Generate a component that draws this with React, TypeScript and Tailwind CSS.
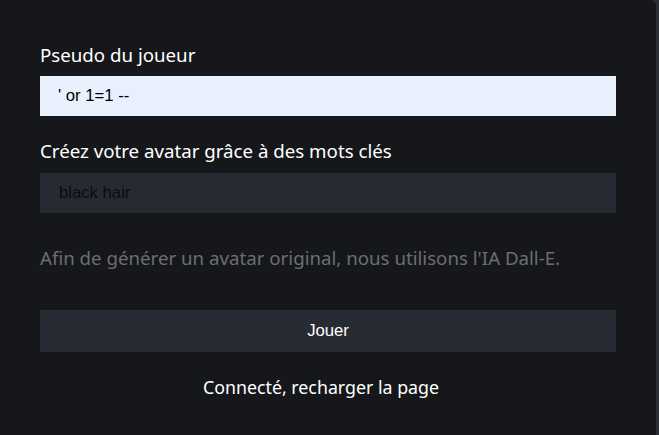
import React from 'react';

const labelFont = { fontFamily: '"Noto Sans", "Open Sans", sans-serif' };

const App = () => {
  return (
    <div className="flex h-[435px] w-[659px] bg-[#2b2e35]">
      <div
        className="flex w-[656px] flex-col rounded-tr-[6px] bg-[#16171b] px-10 pt-[41px]"
        style={labelFont}
      >
        <label className="h-[27px] text-[18.7px] leading-[27px] text-white">Pseudo du joueur</label>
        <input
          className="mt-2 h-10 w-full bg-[#e8f0fe] pl-[18px] font-['Liberation_Sans',Arial,sans-serif] text-[16.7px] text-black outline-none"
          defaultValue="' or 1=1 --"
        />

        <label className="mt-[21px] h-[27px] text-[18.7px] leading-[27px] text-white">
          Créez votre avatar grâce à des mots clés
        </label>
        <input
          className="mt-[9px] h-10 w-full bg-[#262a33] pl-[19px] font-['Liberation_Sans',Arial,sans-serif] text-[16.7px] text-[#0d0d0d] outline-none"
          defaultValue="black hair"
        />

        <p className="mt-[31px] h-[27px] text-[18.7px] leading-[27px] text-[#6b6e73]">
          Afin de générer un avatar original, nous utilisons l'IA Dall-E.
        </p>

        <button className="mt-[39px] h-[42px] w-full bg-[#272b33] font-['Liberation_Sans',Arial,sans-serif] text-[16.7px] text-white">
          Jouer
        </button>

        <p className="mt-[22px] h-[27px] pr-[14px] text-center text-[17.8px] leading-[27px] text-white">
          Connecté, recharger la page
        </p>
      </div>
    </div>
  );
};

export default App;
